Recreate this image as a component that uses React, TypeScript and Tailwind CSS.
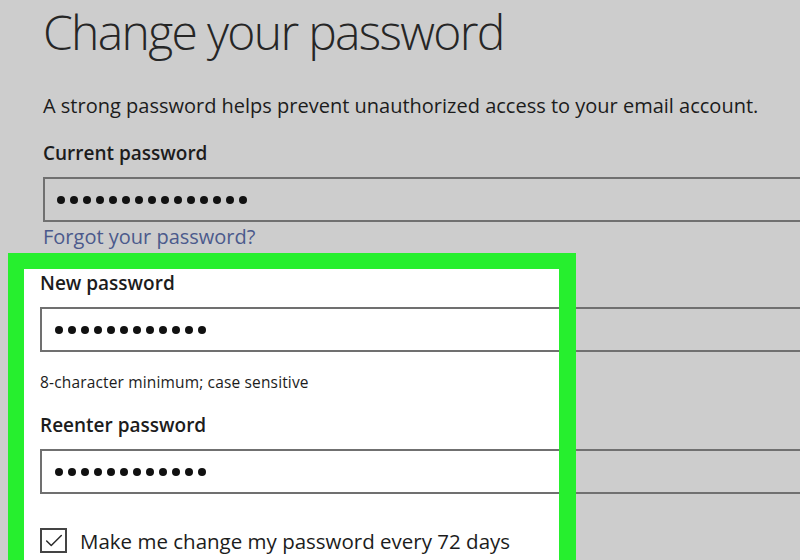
import { Check } from "lucide-react";

const font = { fontFamily: '"Open Sans", "Liberation Sans", sans-serif' };

function Dots({ count }: { count: number }) {
  return (
    <div className="flex items-center gap-[5px]">
      {Array.from({ length: count }).map((_, i) => (
        <div key={i} className="w-2 h-2 rounded-full bg-[#111]" />
      ))}
    </div>
  );
}

export default function App() {
  return (
    <div
      className="w-[800px] h-[560px] overflow-hidden bg-[#cdcdcd] text-[#1c1c1c]"
      style={font}
    >
      <div className="pl-[43px]">
        <h1 className="text-[48px] leading-[64px] font-light text-[#262626] tracking-[-0.035em] whitespace-nowrap">
          Change your password
        </h1>
        <p className="mt-[28px] text-[20px] leading-[28px]">
          A strong password helps prevent unauthorized access to your email account.
        </p>
        <div className="mt-[20px] text-[19px] leading-[26px] font-semibold">
          Current password
        </div>
        <div className="mt-[11px] h-[45px] w-[800px] border-2 border-[#707070] flex items-center pl-[12px]">
          <Dots count={15} />
        </div>
        <div className="mt-[2px] text-[20px] leading-[26px] text-[#4b5a8c]">
          Forgot your password?
        </div>
      </div>

      <div className="relative pl-[40px] pt-[20px]">
        {/* highlight: white fill under the fields, green frame over them */}
        <div className="absolute left-[24px] top-[19px] w-[535px] h-[400px] bg-white" />
        <div className="absolute left-[8px] top-[3px] w-[568px] h-[400px] border-[#26ef2e] border-t-[16px] border-l-[16px] border-r-[17px] z-20" />

        <div className="relative z-10">
          <div className="text-[19px] leading-[26px] font-semibold">
            New password
          </div>
          <div className="mt-[11px] h-[45px] w-[800px] border-2 border-[#707070] flex items-center pl-[13px]">
            <Dots count={12} />
          </div>
          <div className="mt-[21px] text-[15.5px] leading-[18px] tracking-[0.01em]">
            8-character minimum; case sensitive
          </div>
          <div className="mt-[21px] text-[19px] leading-[26px] font-semibold">
            Reenter password
          </div>
          <div className="mt-[11px] h-[45px] w-[800px] border-2 border-[#707070] flex items-center pl-[13px]">
            <Dots count={12} />
          </div>
          <div className="mt-[34px] flex items-start gap-[13px]">
            <div className="w-[27px] h-[25px] border-2 border-[#444] flex items-center justify-center">
              <Check size={22} strokeWidth={1.6} className="text-[#2a2a2a]" />
            </div>
            <div className="-mt-[1px] text-[20.5px] leading-[28px] font-medium">
              Make me change my password every 72 days
            </div>
          </div>
        </div>
      </div>
    </div>
  );
}
